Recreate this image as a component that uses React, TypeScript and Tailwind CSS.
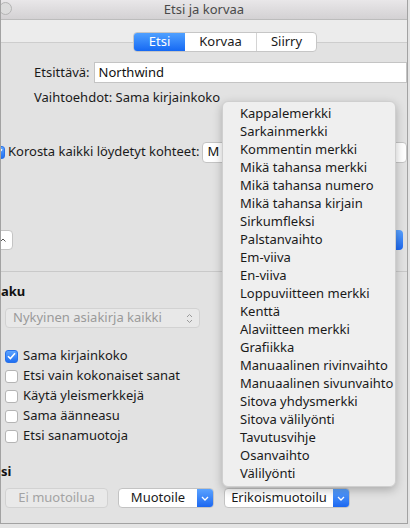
import React from "react";

const FONT = { fontFamily: '"Noto Sans", "Liberation Sans", sans-serif' };

const MENU_ITEMS = [
  "Kappalemerkki",
  "Sarkainmerkki",
  "Kommentin merkki",
  "Mikä tahansa merkki",
  "Mikä tahansa numero",
  "Mikä tahansa kirjain",
  "Sirkumfleksi",
  "Palstanvaihto",
  "Em-viiva",
  "En-viiva",
  "Loppuviitteen merkki",
  "Kenttä",
  "Alaviitteen merkki",
  "Grafiikka",
  "Manuaalinen rivinvaihto",
  "Manuaalinen sivunvaihto",
  "Sitova yhdysmerkki",
  "Sitova välilyönti",
  "Tavutusvihje",
  "Osanvaihto",
  "Välilyönti",
];

const OPTIONS = [
  { label: "Sama kirjainkoko", checked: true },
  { label: "Etsi vain kokonaiset sanat", checked: false },
  { label: "Käytä yleismerkkejä", checked: false },
  { label: "Sama äänneasu", checked: false },
  { label: "Etsi sanamuotoja", checked: false },
];

function CheckBox({ checked }: { checked: boolean }) {
  if (checked)
    return (
      <div className="w-[13px] h-[13px] shrink-0 rounded-[3px] bg-gradient-to-b from-[#5da4ff] to-[#1f6ff2] border border-[#2a72e8] flex items-center justify-center">
        <svg width="9" height="8" viewBox="0 0 9 8">
          <path d="M1 4.2 L3.4 6.6 L8 1.2" fill="none" stroke="#fff" strokeWidth="1.6" />
        </svg>
      </div>
    );
  return (
    <div className="w-[13px] h-[13px] shrink-0 rounded-[3px] bg-white border border-[#b4b4b4]" />
  );
}

function ArrowDown() {
  return (
    <svg width="8" height="5" viewBox="0 0 8 5">
      <path d="M1 1 L4 4 L7 1" fill="none" stroke="#fff" strokeWidth="1.3" />
    </svg>
  );
}

function SplitButton({ label, width }: { label: string; width: string }) {
  return (
    <div className={`${width} h-[20px] flex rounded-[4px] border border-[#c3c3c3] bg-white overflow-hidden`}>
      <div className="flex-1 flex items-center justify-center text-[13px] text-[#1a1a1a]">
        {label}
      </div>
      <div className="w-[16px] bg-gradient-to-b from-[#5aa2ff] to-[#1c67f0] flex items-center justify-center">
        <ArrowDown />
      </div>
    </div>
  );
}

export default function App() {
  return (
    <div className="w-[410px] h-[528px] bg-[#e4e4e4] relative overflow-hidden" style={FONT}>
      <div className="w-[408px] h-[524px] bg-[#e2e2e2] border-l border-r border-b border-[#a2a2a2] flex flex-col overflow-hidden">
        {/* title bar */}
        <div className="h-[20px] shrink-0 bg-gradient-to-b from-[#e9e7e9] to-[#d3d1d3] border-b border-[#bcbcbc] relative flex items-center justify-center">
          <div className="absolute left-[-2px] top-[2px] w-[13px] h-[13px] rounded-full border border-[#b4b4b4] bg-[#dcdcdc]" />
          <span className="text-[13px] text-[#4a4a4a] leading-none">Etsi ja korvaa</span>
        </div>
        {/* toolbar */}
        <div className="h-[23px] shrink-0 bg-[#ececec] border-b border-[#cdcdcd]" />
        <div className="mt-[-11px] flex justify-center pl-[42px]">
          <div className="flex h-[20px] rounded-[4px] border border-[#c6c6c6] bg-white overflow-hidden text-[13px]">
            <div className="w-[51px] flex items-center justify-center text-white bg-gradient-to-b from-[#4fa0ff] to-[#1568f3]">
              Etsi
            </div>
            <div className="w-[72px] flex items-center justify-center text-[#1a1a1a] border-r border-[#d4d4d4]">
              Korvaa
            </div>
            <div className="w-[59px] flex items-center justify-center text-[#1a1a1a]">
              Siirry
            </div>
          </div>
        </div>

        {/* search field */}
        <div className="mt-[10px] flex items-center h-[21px]">
          <span className="ml-[33px] text-[13px] text-[#1a1a1a]">Etsittävä:</span>
          <div className="ml-[4px] flex-1 h-[21px] bg-white border border-[#c4c4c4] flex items-center pl-[4px] text-[13px] text-[#111]">
            Northwind
          </div>
        </div>
        <div className="mt-[6px] ml-[33px] h-[18px] flex items-center text-[13px] text-[#1a1a1a]">
          Vaihtoehdot: Sama kirjainkoko
        </div>

        {/* highlight row */}
        <div className="mt-[34px] flex items-center h-[22px]">
          <div className="ml-[-9px]">
            <CheckBox checked />
          </div>
          <span className="ml-[3px] text-[13px] text-[#1a1a1a]">Korosta kaikki löydetyt kohteet:</span>
          <div className="ml-[3px] flex-1 h-[21px] bg-white border border-[#c4c4c4] rounded-[4px] flex items-center pl-[4px] text-[13px] text-[#111]">
            M
          </div>
        </div>

        {/* buttons row (partially hidden) */}
        <div className="mt-[67px] flex items-center justify-between h-[20px]">
          <div className="ml-[-30px] w-[42px] h-[20px] bg-white border border-[#c4c4c4] rounded-[4px] flex items-center justify-end pr-[6px]">
            <svg width="6" height="4" viewBox="0 0 6 4">
              <path d="M0.5 3.5 L3 1 L5.5 3.5" fill="none" stroke="#555" strokeWidth="1" />
            </svg>
          </div>
          <div className="mr-[4px] w-[90px] h-[20px] rounded-[4px] bg-gradient-to-b from-[#5aa2ff] to-[#1c67f0]" />
        </div>

        <div className="mt-[21px] h-px bg-[#c9c9c9]" />

        {/* search section */}
        <div className="mt-[11px] h-[18px] flex items-center">
          <span className="text-[13px] font-bold text-[#111]">aku</span>
        </div>
        <div className="mt-[7px] ml-[4px] w-[195px] h-[20px] rounded-[4px] border border-[#d2d2d2] bg-[#e8e8e8] flex items-center justify-between pl-[7px] pr-[6px] text-[13px] text-[#9a9a9a]">
          <span>Nykyinen asiakirja kaikki</span>
          <svg width="7" height="11" viewBox="0 0 7 11">
            <path d="M1 4 L3.5 1.5 L6 4 M1 7 L3.5 9.5 L6 7" fill="none" stroke="#9a9a9a" strokeWidth="1" />
          </svg>
        </div>

        <div className="mt-[18px] flex flex-col">
          {OPTIONS.map((o) => (
            <div key={o.label} className="h-[20px] flex items-center ml-[4px] gap-[5px]">
              <CheckBox checked={o.checked} />
              <span className="text-[13px] text-[#1a1a1a]">{o.label}</span>
            </div>
          ))}
        </div>

        {/* format section */}
        <div className="mt-[17px] h-[18px] flex items-center">
          <span className="text-[13px] font-bold text-[#111]">si</span>
        </div>
        <div className="mt-[7px] ml-[4px] flex items-center gap-[10px]">
          <div className="w-[103px] h-[20px] rounded-[4px] border border-[#d2d2d2] bg-[#e9e9e9] flex items-center justify-center text-[13px] text-[#a3a3a3]">
            Ei muotoilua
          </div>
          <SplitButton label="Muotoile" width="w-[96px]" />
          <SplitButton label="Erikoismuotoilu" width="w-[126px]" />
        </div>
      </div>

      {/* popup menu */}
      <div className="absolute left-[222px] top-[101px] w-[174px] h-[386px] rounded-[6px] bg-[#efefef] border border-[#cfcfcf] shadow-[0_3px_10px_rgba(0,0,0,0.25)] pt-[3px]">
        {MENU_ITEMS.map((item) => (
          <div key={item} className="h-[18px] flex items-center pl-[17px] text-[13px] text-[#1a1a1a]">
            {item}
          </div>
        ))}
      </div>
    </div>
  );
}
